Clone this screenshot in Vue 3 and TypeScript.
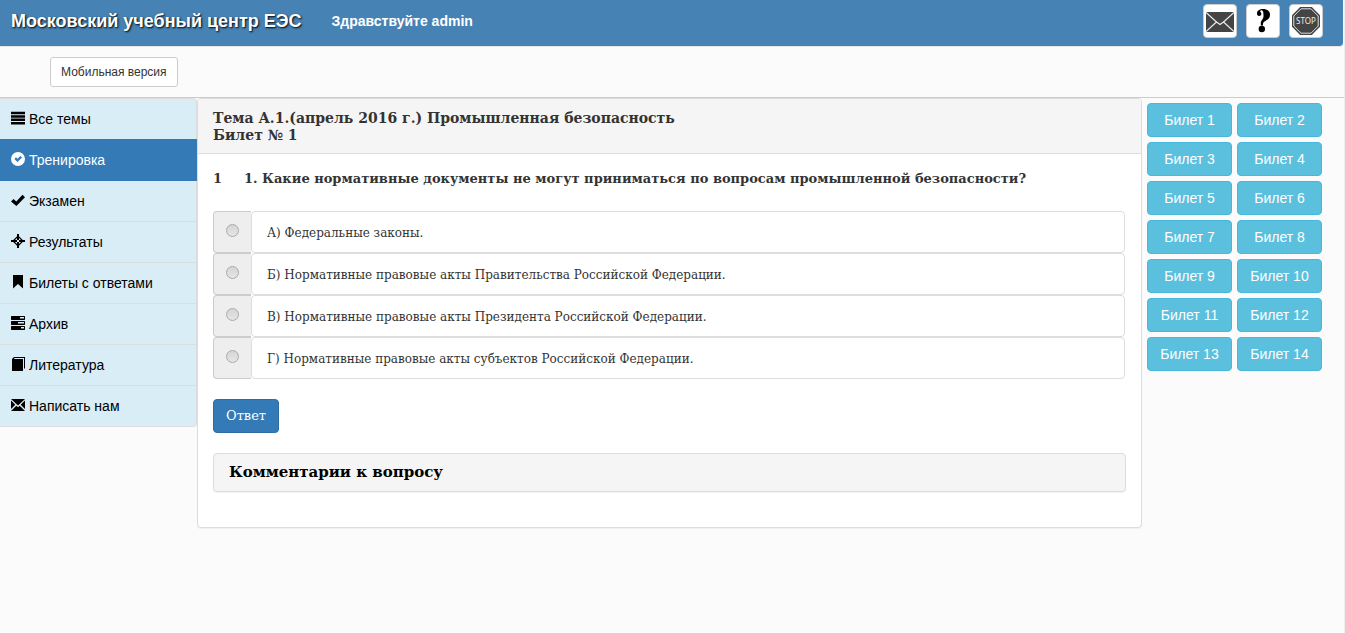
<script setup lang="ts">
import { ref } from 'vue'

interface MenuItem {
  label: string
  icon: string
}

const menu: MenuItem[] = [
  { label: 'Все темы', icon: 'M0 .8h14v2.500H0zM0 4.200h14v2.500H0zM0 7.600h14v2.500H0zM0 11h14v2.500H0z' },
  { label: 'Тренировка', icon: 'M7 0a7 7 0 1 0 0 14A7 7 0 0 0 7 0zM3.4 6.9 5 5.3l1.5 1.5L9.4 4 11 5.6 6.5 10z' },
  { label: 'Экзамен', icon: 'M0 8.400 2.500 5.900 5.300 8.500 11.500 1.800 14 4.200 5.400 13z' },
  { label: 'Результаты', icon: 'M6 0h2v2.200L11.800 6H14v2h-2.200L8 11.800V14H6v-2.200L2.200 8H0V6h2.200L6 2.200zM6 4 4 6h2zM8 4v2h2zM6 8H4l2 2zM8 8v2l2-2zM6 6h2v2H6z' },
  { label: 'Билеты с ответами', icon: 'M2 0h10v13.500L7 9l-5 4.500z' },
  { label: 'Архив', icon: 'M.5 0h13l.5.500v3l-.5.500H.5L0 3.500v-3zM9 1v1.500h4V1zM.5 5h13l.5.500v3l-.5.500H.5L0 8.500v-3zM7 6v1.500h6V6zM.5 10h13l.5.500v3l-.5.500H.5l-.5-.5v-3zM10 11v1.500h3V11z' },
  { label: 'Литература', icon: 'M3 0h11v11l-1 1V1H3.500L3 2h9v12H1V2z' },
  { label: 'Написать нам', icon: 'M0 1h14L7 7.500zM0 2.500 4.300 6.700 0 11zM14 2.500V11L9.700 6.700zM0 13l5.300-5.300L7 9.300l1.700-1.600L14 13z' },
]

const answers: string[] = [
  'А) Федеральные законы.',
  'Б) Нормативные правовые акты Правительства Российской Федерации.',
  'В) Нормативные правовые акты Президента Российской Федерации.',
  'Г) Нормативные правовые акты субъектов Российской Федерации.',
]

const active = ref(1)
const selected = ref<number | null>(null)
</script>

<template>
  <div class="page">
    <header class="topbar">
      <a class="brand" href="#">Московский учебный центр ЕЭС</a>
      <span class="greeting">Здравствуйте admin</span>
      <div class="actions">
        <button type="button" aria-label="Сообщения">
          <svg width="28" height="28" viewBox="0 0 28 28">
            <rect x="0" y="5" width="28" height="20" fill="#444" />
            <path d="M0 5.500 10.500 15 0 24.500M28 5.500 17.500 15 28 24.500M10.500 15l3.500 2.500 3.500-2.500" fill="none" stroke="#eee" stroke-width="1.200" />
          </svg>
        </button>
        <button type="button" aria-label="Помощь">
          <svg width="28" height="28" viewBox="0 0 28 28">
            <path d="M8 6.500C8 3.500 10.500 2 14 2c4.500 0 7 2.200 7 5.800 0 4-3 5.200-5.500 6.700-1.500.9-1.500 2-1.500 4h-2.200v-3c0-2 2.700-3 2.700-6.500 0-3.500-.3-5.800-1.800-5.800-1 0-1.700.5-1.500 1.200.2.500 1.200 1 1.200 2.600A2.300 2.300 0 0 1 10.200 9C8.700 9 8 8 8 6.500z" fill="#000" />
            <circle cx="12.800" cy="22" r="3.200" fill="#000" />
          </svg>
        </button>
        <button type="button" aria-label="Выход">
          <svg width="28" height="28" viewBox="0 0 28 28">
            <path d="M8.200 0h11.600L28 8.200v11.600L19.800 28H8.200L0 19.800V8.200z" fill="#444" />
            <path d="M9 1.800h10L26.200 9v10L19 26.200H9L1.800 19V9z" fill="none" stroke="#ddd" stroke-width="1" />
            <text x="14" y="17" text-anchor="middle" class="stop">STOP</text>
          </svg>
        </button>
      </div>
    </header>

    <div class="toolbar">
      <button type="button" class="mobile">Мобильная версия</button>
    </div>

    <div class="columns">
      <nav class="menu">
        <a
          v-for="(item, i) in menu"
          :key="item.label"
          href="#"
          :class="{ active: i === active }"
          @click.prevent="active = i"
        >
          <svg width="14" height="14" viewBox="0 0 14 14" aria-hidden="true">
            <path :d="item.icon" fill="currentColor" fill-rule="evenodd" />
          </svg>
          {{ item.label }}
        </a>
      </nav>

      <main class="card">
        <h1 class="card-head">Тема А.1.(апрель 2016 г.) Промышленная безопасность<br />Билет № 1</h1>
        <form class="card-body" @submit.prevent>
          <h2 class="question">
            <span class="number">1</span>
            <span>1. Какие нормативные документы не могут приниматься по вопросам промышленной безопасности?</span>
          </h2>
          <div v-for="(answer, i) in answers" :key="answer" class="answer">
            <span class="addon">
              <input :id="`answer-${i}`" v-model="selected" type="radio" name="answer" :value="i" />
            </span>
            <label :for="`answer-${i}`">{{ answer }}</label>
          </div>
          <button type="submit" class="submit">Ответ</button>
          <section class="comments">
            <h3><a href="#">Комментарии к вопросу</a></h3>
          </section>
        </form>
      </main>

      <aside class="tickets">
        <button v-for="n in 14" :key="n" type="button">Билет {{ n }}</button>
      </aside>
    </div>
  </div>
</template>

<style>
body {
  margin: 0;
  background: #fbfbfb;
}
</style>

<style scoped>
.page,
.page * {
  box-sizing: border-box;
}
.page {
  min-height: 100vh;
  border-right: 1px solid #eee;
  color: #333;
  font: 14px/20px "Liberation Sans", Arial, sans-serif;
}
button {
  font: inherit;
  cursor: pointer;
}
a {
  color: inherit;
  text-decoration: none;
}
.topbar {
  display: flex;
  align-items: center;
  height: 47px;
  margin-right: 1px;
  padding: 0 20px 4px 11px;
  background: #4682b4;
  border-bottom: 1px solid #e7e7e7;
  border-radius: 0 0 4px 0;
  color: #fff;
  font-weight: bold;
}
.brand {
  font-size: 18px;
  text-shadow: 1px 1px 2px #000;
}
.greeting {
  margin-left: 30px;
}
.actions {
  display: flex;
  gap: 9px;
  margin-left: auto;
}
.actions button {
  display: grid;
  place-items: center;
  width: 34px;
  height: 34px;
  padding: 0;
  background: #fff;
  border: 1px solid #ccc;
  border-radius: 4px;
}
.stop {
  fill: #eee;
  font: 8px "Noto Sans", sans-serif;
}
.toolbar {
  height: 51px;
  padding: 10px 50px;
  border-bottom: 1px solid #ccc;
}
.mobile {
  height: 30px;
  padding: 0 10px;
  background: #fff;
  border: 1px solid #ccc;
  border-radius: 3px;
  color: #333;
  font-size: 12px;
}
.columns {
  display: flex;
  align-items: flex-start;
}
.menu {
  flex: 0 0 197px;
  border: solid #ddd;
  border-width: 0 1px 1px 0;
  border-radius: 0 4px 4px 0;
  background: #d9edf7;
}
.menu a {
  display: flex;
  align-items: center;
  gap: 4px;
  height: 41px;
  padding-left: 11px;
  border-top: 1px solid #ddd;
  color: #000;
}
.menu a:first-child {
  border-top-right-radius: 4px;
}
.menu svg {
  margin-bottom: 2px;
}
.menu a.active {
  position: relative;
  height: 42px;
  margin: 0 -1px -1px 0;
  padding-bottom: 1px;
  background: #337ab7;
  border-color: #337ab7;
  color: #fff;
}
.card {
  flex: 1;
  min-width: 0;
  background: #fff;
  border: 1px solid #ddd;
  border-radius: 4px;
  box-shadow: 0 1px 1px rgba(0, 0, 0, 0.05);
  font-family: Georgia, "DejaVu Serif", serif;
}
.card-head {
  margin: 0;
  padding: 11px 15px 9px;
  background: #f5f5f5;
  border-bottom: 1px solid #ddd;
  border-radius: 3px 3px 0 0;
  font-size: 14px;
  line-height: 17px;
}
.card-body {
  padding: 15px 15px 35px;
}
.question {
  display: flex;
  margin: 0 0 22px;
  font-size: 13px;
  line-height: 20px;
}
.number {
  width: 31px;
}
.answer {
  display: flex;
  height: 42px;
  margin-right: 1px;
}
.addon {
  display: flex;
  justify-content: center;
  width: 38px;
  padding-top: 12px;
  background: #eee;
  border: 1px solid #ccc;
  border-right: 0;
  border-radius: 4px 0 0 4px;
}
.addon input {
  appearance: none;
  width: 13px;
  height: 13px;
  margin: 0;
  background: linear-gradient(#d5d5d5, #e5e5e5);
  border: 1px solid #aaa;
  border-radius: 50%;
}
.addon input:checked {
  background: radial-gradient(#333 35%, #e0e0e0 40%);
}
.answer label {
  flex: 1;
  padding: 11px 15px 9px;
  border: 1px solid #ddd;
  border-radius: 4px;
  font-size: 12px;
}
.submit {
  display: block;
  height: 34px;
  margin: 20px 0;
  padding: 0 12px;
  background: #337ab7;
  border: 1px solid #2e6da4;
  border-radius: 4px;
  color: #fff;
  font-size: 13px;
}
.comments {
  padding: 9px 15px;
  background: #f5f5f5;
  border: 1px solid #ddd;
  border-radius: 4px;
  box-shadow: 0 1px 1px rgba(0, 0, 0, 0.05);
}
.comments h3 {
  margin: 0;
  color: #000;
  font-size: 15px;
  line-height: 19px;
}
.tickets {
  display: grid;
  grid-template-columns: 85px 85px;
  gap: 5px;
  padding: 5px 22px 0 5px;
}
.tickets button {
  height: 34px;
  padding: 0;
  background: #5bc0de;
  border: 1px solid #46b8da;
  border-radius: 4px;
  color: #fff;
}
</style>
